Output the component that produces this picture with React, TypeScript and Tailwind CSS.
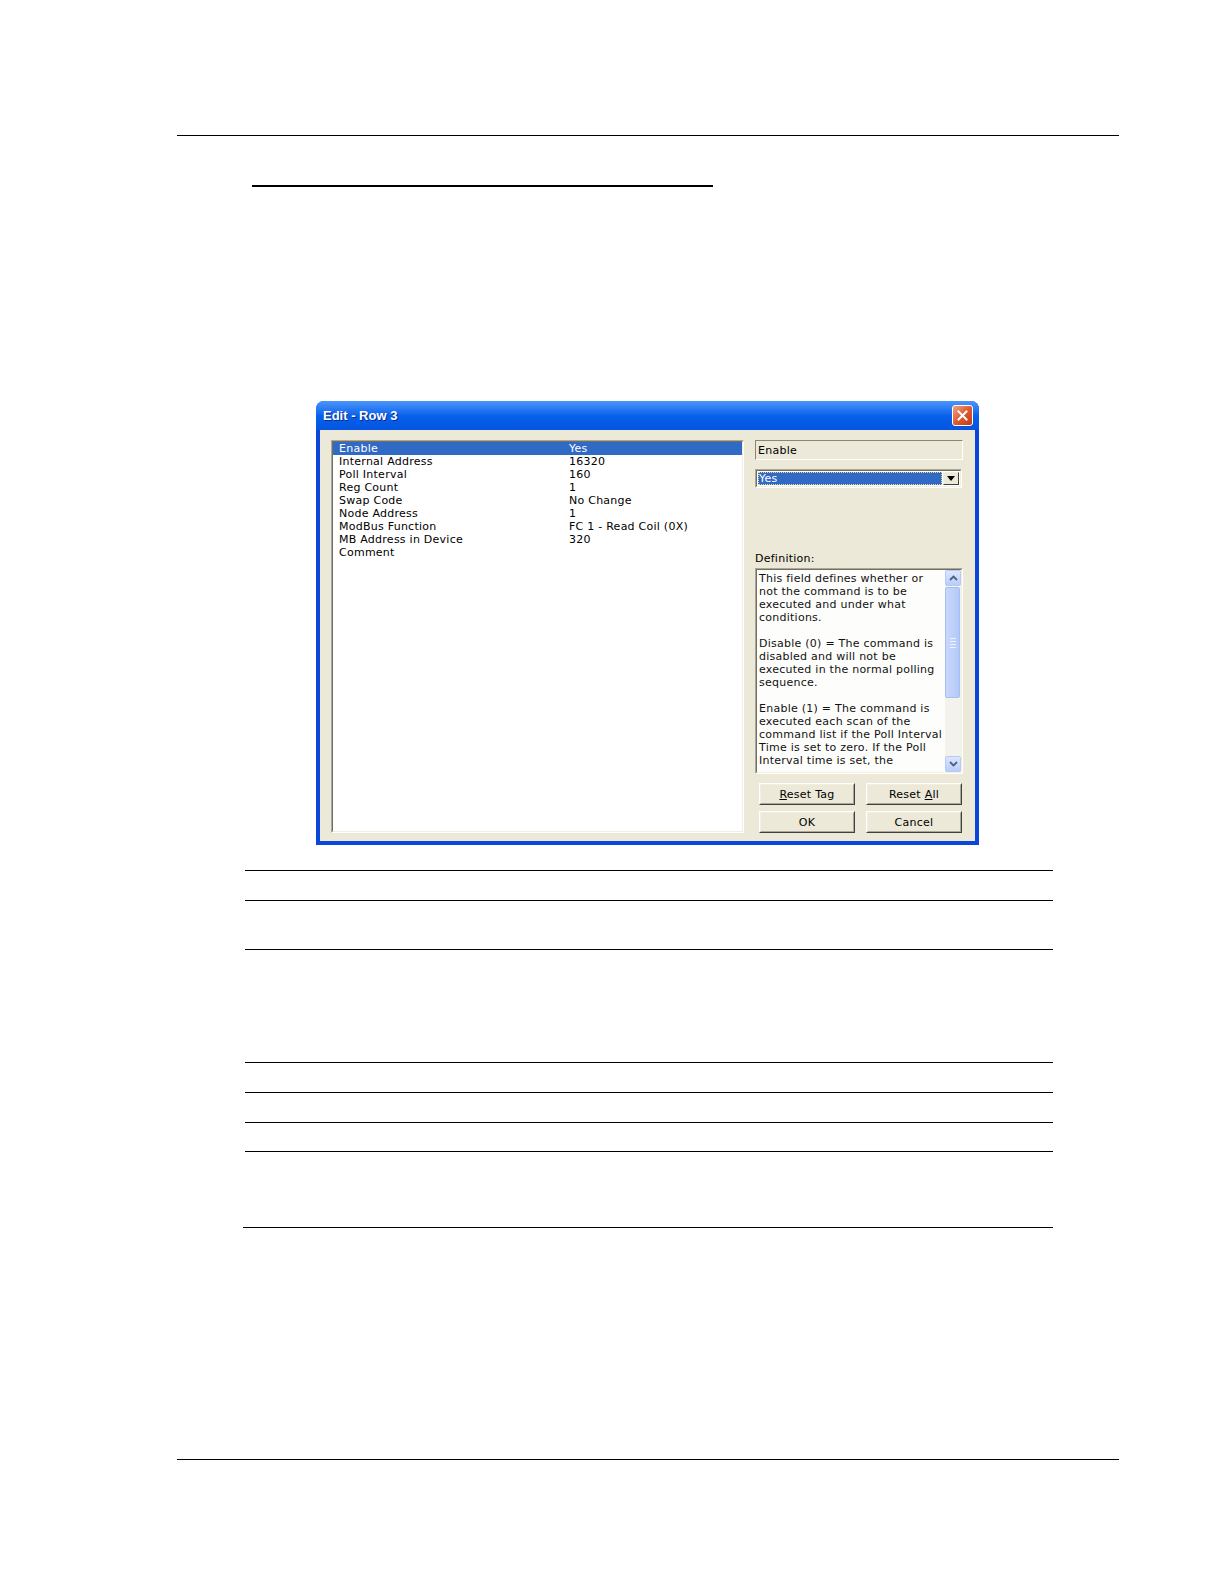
import React from 'react';

const rows: [string, string][] = [
  ['Enable', 'Yes'],
  ['Internal Address', '16320'],
  ['Poll Interval', '160'],
  ['Reg Count', '1'],
  ['Swap Code', 'No Change'],
  ['Node Address', '1'],
  ['ModBus Function', 'FC 1 - Read Coil (0X)'],
  ['MB Address in Device', '320'],
  ['Comment', ''],
];

const definition = [
  'This field defines whether or',
  'not the command is to be',
  'executed and under what',
  'conditions.',
  '',
  'Disable (0) = The command is',
  'disabled and will not be',
  'executed in the normal polling',
  'sequence.',
  '',
  'Enable (1) = The command is',
  'executed each scan of the',
  'command list if the Poll Interval',
  'Time is set to zero. If the Poll',
  'Interval time is set, the',
];

const Sunken: React.FC<{ className?: string; inner?: string; children?: React.ReactNode }> = ({ className = '', inner = '', children }) => (
  <div className={`border border-t-[#ACA899] border-l-[#ACA899] border-r-white border-b-white ${className}`}>
    <div className={`h-full w-full border border-t-[#716F64] border-l-[#716F64] border-r-[#F1EFE2] border-b-[#F1EFE2] ${inner}`}>
      {children}
    </div>
  </div>
);

const Button: React.FC<{ children: React.ReactNode }> = ({ children }) => (
  <div className="h-[22px] w-[96px] border border-t-white border-l-white border-r-[#404040] border-b-[#404040]">
    <div className="flex h-full w-full items-center justify-center border border-t-[#F1EFE2] border-l-[#F1EFE2] border-r-[#ACA899] border-b-[#ACA899] bg-[#ECE9D8]">
      {children}
    </div>
  </div>
);

const ScrollBtn: React.FC<{ up?: boolean }> = ({ up }) => (
  <div className="flex h-[16px] w-[16px] items-center justify-center rounded-[2px] border border-[#B7CAF5] bg-gradient-to-b from-[#DCE6FD] to-[#B9CDF9]">
    <svg width="9" height="6" viewBox="0 0 9 6">
      <path d={up ? 'M1 5 L4.5 1.5 L8 5' : 'M1 1 L4.5 4.5 L8 1'} fill="none" stroke="#4D6185" strokeWidth="1.8" />
    </svg>
  </div>
);

const Line: React.FC<{ className: string }> = ({ className }) => <div className={`bg-black ${className}`} />;

export default function App() {
  return (
    <div className="flex min-h-[1584px] w-[1224px] flex-col bg-white">
      <Line className="ml-[177px] mt-[135px] h-px w-[942px]" />
      <Line className="ml-[252px] mt-[49px] h-[2px] w-[461px]" />

      <div className="ml-[316px] mt-[214px] flex h-[444px] w-[663px] flex-col overflow-hidden rounded-t-[8px] bg-[#0A46DA] px-[4px] pb-[4px] font-['DejaVu_Sans',sans-serif] text-[11px] leading-[13px] tracking-[0.25px] text-black">
        <div className="-mx-[4px] flex h-[29px] shrink-0 items-center justify-between bg-gradient-to-b from-[#4A95FB] via-[#0861EB] to-[#0454E0] pl-[7px] pr-[6px]">
          <span className="font-['Liberation_Sans',sans-serif] text-[13px] font-bold tracking-normal text-white [text-shadow:1px_1px_0_#0B2A8C]">Edit - Row 3</span>
          <div className="flex h-[21px] w-[21px] items-center justify-center rounded-[3px] border border-white bg-gradient-to-br from-[#F0A184] via-[#DE5A32] to-[#C23A12]">
            <svg width="11" height="11" viewBox="0 0 11 11">
              <path d="M1.5 1.5 L9.5 9.5 M9.5 1.5 L1.5 9.5" stroke="white" strokeWidth="2" strokeLinecap="square" />
            </svg>
          </div>
        </div>

        <div className="flex flex-1 gap-[11px] bg-[#ECE9D8] pb-[8px] pl-[11px] pr-[11px] pt-[10px]">
          <Sunken className="h-[393px] w-[413px]" inner="bg-white">
            {rows.map(([label, value], i) => (
              <div key={label} className={`flex h-[13px] pl-[6px] ${i === 0 ? 'bg-[#316AC5] text-white' : ''}`}>
                <span className="w-[230px] shrink-0">{label}</span>
                <span>{value}</span>
              </div>
            ))}
          </Sunken>

          <div className="flex w-[209px] flex-col">
            <div className="flex h-[20px] w-[208px] items-center border border-t-[#888679] border-l-[#888679] border-r-white border-b-white pl-[2px]">
              Enable
            </div>

            <Sunken className="mt-[9px] h-[19px] w-[207px]" inner="flex bg-white p-px">
              <div className="flex flex-1 items-center bg-[#316AC5] pl-[1px] text-white outline-1 -outline-offset-1 outline-dotted outline-[#E8D88A]">
                Yes
              </div>
              <div className="ml-px flex w-[16px] items-center justify-center border border-t-[#F1EFE2] border-l-[#F1EFE2] border-r-[#404040] border-b-[#404040] bg-[#ECE9D8]">
                <svg width="8" height="5" viewBox="0 0 8 5">
                  <path d="M0 0 H8 L4 5 Z" fill="black" />
                </svg>
              </div>
            </Sunken>

            <div className="mt-[64px] h-[13px]">Definition:</div>

            <Sunken className="mt-[3px] h-[206px] w-[208px]" inner="flex bg-[#FDFDFB]">
              <div className="flex-1 overflow-hidden pl-[2px] pt-[2px] text-[#111]">
                {definition.map((t, i) => (
                  <div key={i} className="h-[13px] whitespace-nowrap">{t}</div>
                ))}
              </div>
              <div className="flex w-[16px] flex-col bg-[#F3F2EC]">
                <ScrollBtn up />
                <div className="flex-1">
                  <div className="mr-px mt-px flex h-[111px] items-center justify-center rounded-[2px] border border-[#A6BDF2] bg-gradient-to-r from-[#C9D8FC] to-[#B4C9F8]">
                    <div className="flex flex-col gap-[2px]">
                      <div className="h-px w-[6px] bg-[#EEF3FE]" />
                      <div className="h-px w-[6px] bg-[#EEF3FE]" />
                      <div className="h-px w-[6px] bg-[#EEF3FE]" />
                      <div className="h-px w-[6px] bg-[#EEF3FE]" />
                    </div>
                  </div>
                </div>
                <ScrollBtn />
              </div>
            </Sunken>

            <div className="mt-[9px] flex gap-[11px] pl-[4px]">
              <Button><span><span className="underline">R</span>eset Tag</span></Button>
              <Button><span>Reset <span className="underline">A</span>ll</span></Button>
            </div>
            <div className="mt-[6px] flex gap-[11px] pl-[4px]">
              <Button>OK</Button>
              <Button>Cancel</Button>
            </div>
          </div>
        </div>
      </div>

      <div className="ml-[245px] flex w-[808px] flex-col">
        <Line className="mt-[25px] h-px w-full" />
        <Line className="mt-[29px] h-px w-full" />
        <Line className="mt-[48px] h-px w-full" />
        <Line className="mt-[112px] h-px w-full" />
        <Line className="mt-[29px] h-px w-full" />
        <Line className="mt-[29px] h-px w-full" />
        <Line className="mt-[28px] h-px w-full" />
      </div>
      <Line className="ml-[243px] mt-[75px] h-px w-[810px]" />
      <Line className="ml-[177px] mt-[231px] h-px w-[942px]" />
    </div>
  );
}
